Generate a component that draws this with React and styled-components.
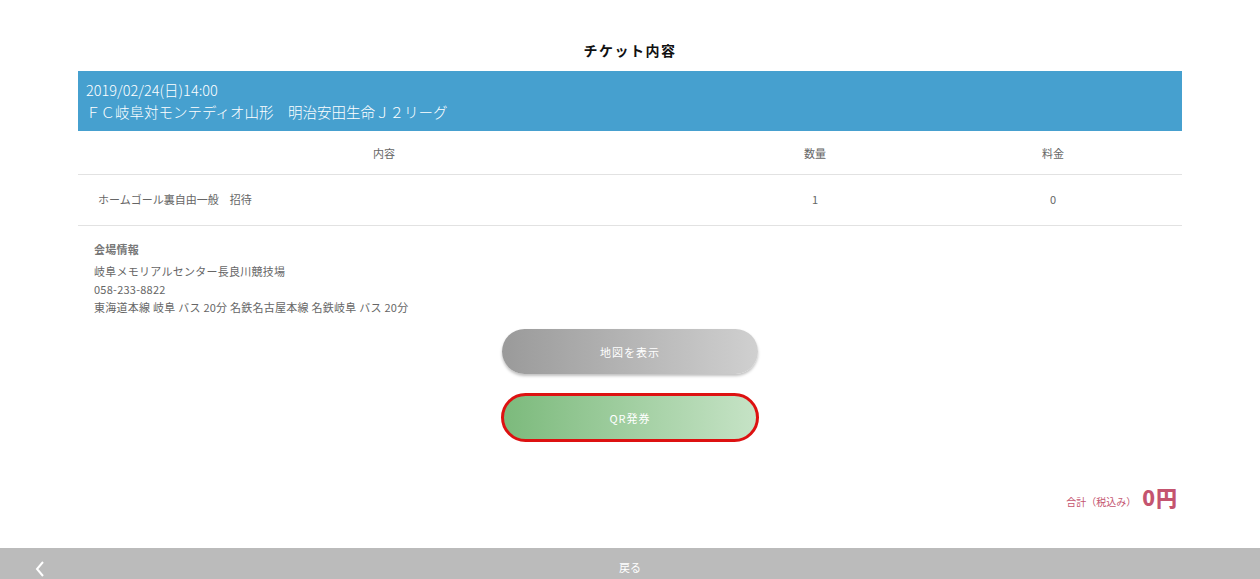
import React from "react";
import styled, { createGlobalStyle } from "styled-components";

const Global = createGlobalStyle`
  html, body { margin: 0; padding: 0; background: #fff; }
  body { font-family: "Noto Sans CJK JP", "Noto Sans", sans-serif; color: #555; }
`;

const Page = styled.div`
  display: flex;
  flex-direction: column;
  min-height: 579px;
`;

const Main = styled.main`
  width: 1104px;
  margin: 0 auto;
  padding-top: 40px;
  display: flex;
  flex-direction: column;
`;

const Title = styled.h1`
  margin: 0 0 11px;
  height: 20px;
  line-height: 20px;
  font-size: 14px;
  font-weight: 700;
  letter-spacing: 1.5px;
  text-align: center;
  color: #111;
`;

const EventHeader = styled.div`
  background: #46a0cf;
  color: #fff;
  padding: 8px 8px;
  font-size: 14.5px;
  font-weight: 300;
  line-height: 22px;
  height: 60px;
  box-sizing: border-box;
`;

const Row = styled.div`
  display: grid;
  grid-template-columns: 612px 250px 1fr;
  border-bottom: 1px solid #e2e2e2;
  height: ${(p) => (p.$head ? "44px" : "51px")};
  padding-bottom: ${(p) => (p.$head ? "0" : "3px")};
  box-sizing: border-box;
  align-items: center;
  font-size: 11px;
  color: #666;
`;

const Cell = styled.div`
  text-align: ${(p) => (p.$left ? "left" : "center")};
  padding-left: ${(p) => (p.$left ? "20px" : "0")};
  padding-right: ${(p) => (p.$last ? "16px" : "0")};
`;

const Venue = styled.section`
  padding: 14px 16px 0;
  font-size: 11px;
  line-height: 18px;
  letter-spacing: 0.25px;
  color: #666;
`;

const VenueLabel = styled.div`
  font-weight: 700;
  color: #777;
  margin-bottom: 4px;
`;

const Buttons = styled.div`
  display: flex;
  flex-direction: column;
  align-items: center;
  gap: 19px;
  margin-top: 13px;
`;

const PillButton = styled.button`
  width: ${(p) => (p.$outlined ? "258px" : "256px")};
  height: ${(p) => (p.$outlined ? "49px" : "45px")};
  border-radius: 25px;
  border: ${(p) => (p.$outlined ? "3px solid #dd1111" : "none")};
  background: ${(p) =>
    p.$outlined
      ? "linear-gradient(90deg, #7cba7c 0%, #c6e3c6 100%)"
      : "linear-gradient(90deg, #9a9a9a 0%, #d0d0d0 100%)"};
  box-shadow: ${(p) => (p.$outlined ? "none" : "0 2px 3px rgba(0,0,0,0.25)")};
  color: #fff;
  font-family: inherit;
  font-size: 11px;
  letter-spacing: 1px;
  box-sizing: border-box;
  cursor: pointer;
`;

const Total = styled.div`
  display: flex;
  justify-content: flex-end;
  align-items: baseline;
  gap: 6px;
  margin-top: 40px;
  padding-right: 4px;
  color: #c4546f;
`;

const TotalLabel = styled.span`
  font-size: 10px;
`;

const TotalValue = styled.span`
  font-size: 21px;
  font-weight: 900;
  letter-spacing: 1px;
`;

const Footer = styled.footer`
  margin-top: 36px;
  height: 38px;
  background: #bbbbbb;
  color: #fff;
  display: grid;
  grid-template-columns: 80px 1fr 80px;
  align-items: center;
  font-size: 11px;
`;

const Back = styled.div`
  display: flex;
  justify-content: center;
  align-items: center;
  padding-top: 4px;
`;

const FooterText = styled.div`
  text-align: center;
`;

export default function App() {
  return (
    <Page>
      <Global />
      <Main>
        <Title>チケット内容</Title>
        <EventHeader>
          <div>2019/02/24(日)14:00</div>
          <div>ＦＣ岐阜対モンテディオ山形　明治安田生命Ｊ２リーグ</div>
        </EventHeader>
        <Row $head>
          <Cell>内容</Cell>
          <Cell>数量</Cell>
          <Cell $last>料金</Cell>
        </Row>
        <Row>
          <Cell $left>ホームゴール裏自由一般　招待</Cell>
          <Cell>1</Cell>
          <Cell $last>0</Cell>
        </Row>
        <Venue>
          <VenueLabel>会場情報</VenueLabel>
          <div>岐阜メモリアルセンター長良川競技場</div>
          <div>058-233-8822</div>
          <div>東海道本線 岐阜 バス 20分 名鉄名古屋本線 名鉄岐阜 バス 20分</div>
        </Venue>
        <Buttons>
          <PillButton>地図を表示</PillButton>
          <PillButton $outlined>QR発券</PillButton>
        </Buttons>
        <Total>
          <TotalLabel>合計（税込み）</TotalLabel>
          <TotalValue>0円</TotalValue>
        </Total>
      </Main>
      <Footer>
        <Back>
          <svg width="12" height="18" viewBox="0 0 12 18">
            <path d="M9 2 L3 9 L9 16" fill="none" stroke="#fff" strokeWidth="2" />
          </svg>
        </Back>
        <FooterText>戻る</FooterText>
        <div />
      </Footer>
    </Page>
  );
}
